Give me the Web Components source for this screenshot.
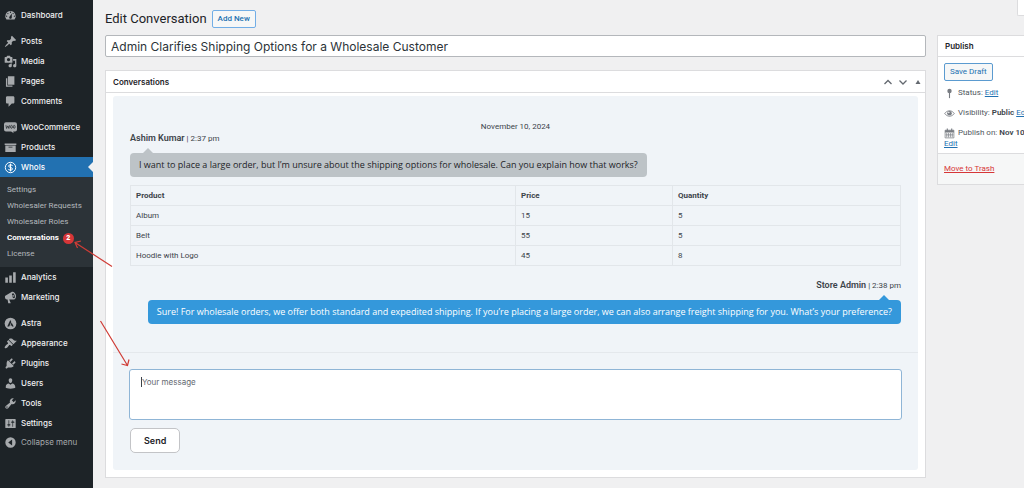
<!DOCTYPE html>
<html lang="en">
<head>
<meta charset="utf-8">
<meta name="viewport" content="width=device-width, initial-scale=1">
<title>Edit Conversation</title>
<style>
  html, body { margin: 0; min-height: 100%; }
  body {
    --ui: Inter, "Liberation Sans", sans-serif;
    --small: Roboto, "Liberation Sans", sans-serif;
    --message: "Open Sans", "Liberation Sans", sans-serif;
    background: #f0f0f1; overflow-x: hidden; font: 9px/12px var(--ui); color: #3c434a;
  }
</style>
</head>
<body>
<admin-shell>
  <admin-menu slot="menu">
    <menu-item icon="dashboard">Dashboard</menu-item>
    <menu-item icon="post" group>Posts</menu-item>
    <menu-item icon="media">Media</menu-item>
    <menu-item icon="page">Pages</menu-item>
    <menu-item icon="comment">Comments</menu-item>
    <menu-item icon="woo" group>WooCommerce</menu-item>
    <menu-item icon="products">Products</menu-item>
    <menu-item icon="dollar" current>Whols</menu-item>
    <sub-menu></sub-menu>
    <menu-item icon="chart">Analytics</menu-item>
    <menu-item icon="megaphone">Marketing</menu-item>
    <menu-item icon="astra" group>Astra</menu-item>
    <menu-item icon="brush">Appearance</menu-item>
    <menu-item icon="plug">Plugins</menu-item>
    <menu-item icon="user">Users</menu-item>
    <menu-item icon="wrench">Tools</menu-item>
    <menu-item icon="sliders">Settings</menu-item>
    <menu-item icon="collapse" muted>Collapse menu</menu-item>
  </admin-menu>

  <page-header slot="header"></page-header>

  <post-box slot="content" heading="Conversations">
    <chat-panel>
      <chat-message author="Ashim Kumar" time="2:37 pm">I want to place a large order, but I’m unsure about the shipping options for wholesale. Can you explain how that works?</chat-message>
      <order-table></order-table>
      <chat-message author="Store Admin" time="2:38 pm" own>Sure! For wholesale orders, we offer both standard and expedited shipping. If you’re placing a large order, we can also arrange freight shipping for you. What’s your preference?</chat-message>
      <reply-form slot="reply"></reply-form>
    </chat-panel>
  </post-box>

  <publish-box slot="side"></publish-box>
</admin-shell>

<script>
const define = (name, html, setup) => {
  const template = document.createElement('template');
  template.innerHTML = html;
  customElements.define(name, class extends HTMLElement {
    connectedCallback() {
      if (this.shadowRoot) return;
      const root = this.attachShadow({ mode: 'open' });
      root.append(template.content.cloneNode(true));
      if (setup) setup(this, root);
    }
  });
};

const p = d => `<path fill-rule="evenodd" d="${d}"/>`;
const ICONS = {
  dashboard: p('M3.76 16h12.48A7.998 7.998 0 0 0 10 3a7.998 7.998 0 0 0-6.24 13zM10 4c.55 0 1 .45 1 1s-.45 1-1 1-1-.45-1-1 .45-1 1-1zM6 6c.55 0 1 .45 1 1s-.45 1-1 1-1-.45-1-1 .45-1 1-1zm8 0c.55 0 1 .45 1 1s-.45 1-1 1-1-.45-1-1 .45-1 1-1zm-5.37 5.55L12 7v6c0 1.1-.9 2-2 2s-2-.9-2-2c0-.57.24-1.08.63-1.45zM4 10c.55 0 1 .45 1 1s-.45 1-1 1-1-.45-1-1 .45-1 1-1zm12 0c.55 0 1 .45 1 1s-.45 1-1 1-1-.45-1-1 .45-1 1-1z'),
  post: p('M10.44 3.02l1.82-1.82 6.36 6.35-1.83 1.82c-1.05-.68-2.48-.57-3.41.36l-.75.75c-.92.93-1.04 2.35-.35 3.41l-1.83 1.82-2.41-2.41-2.8 2.79c-.42.42-3.38 2.71-3.8 2.29s1.86-3.39 2.28-3.81l2.79-2.79L4.1 9.36l1.83-1.82c1.05.69 2.48.57 3.4-.36l.75-.75c.93-.92 1.05-2.35.36-3.41z'),
  media: p('M13 11V4c0-.55-.45-1-1-1h-1.67L9 1H5L3.67 3H2c-.55 0-1 .45-1 1v7c0 .55.45 1 1 1h10c.55 0 1-.45 1-1zM7 4.5c1.38 0 2.5 1.12 2.5 2.5S8.38 9.5 7 9.5 4.5 8.38 4.5 7 5.62 4.5 7 4.5zM14 6h5v10.5c0 1.38-1.12 2.5-2.5 2.5S14 17.88 14 16.5s1.12-2.5 2.5-2.5c.17 0 .34.02.5.05V9h-3V6zm-4 8.05V13h2v3.5c0 1.38-1.12 2.5-2.5 2.5S7 17.88 7 16.5 8.12 14 9.5 14c.17 0 .34.02.5.05z'),
  page: p('M6 15V2h10v13H6zm-1 1h8v2H3V5h2v11z'),
  comment: p('M5 2h9c1.1 0 2 .9 2 2v7c0 1.1-.9 2-2 2h-2l-5 5v-5H5c-1.1 0-2-.9-2-2V4c0-1.1.9-2 2-2z'),
  woo: '<path d="M3 2h14q3 0 3 3v8q0 3-3 3h-3l1 3-4-3H3q-3 0-3-3V5q0-3 3-3z"/><g fill="none" stroke="#1d2327" stroke-width="1.1"><path d="M3 6.500l1 5 2-4 1.500 4 1-5"/><ellipse cx="11.500" cy="9" rx="1.400" ry="2.300"/><ellipse cx="15.700" cy="9" rx="1.400" ry="2.300"/></g>',
  products: p('M19 4v2H1V4h18zM2 7h16v10H2V7zm11 3V9H7v1h6z'),
  dollar: '<g fill="none" stroke="currentColor" stroke-width="1.500"><circle cx="10" cy="10" r="8"/><path d="M13 7.500q-.5-1.700-3-1.700-2.800 0-2.800 2 0 1.700 2.800 2.200 3 .5 3 2.200 0 2-3 2-2.600 0-3.200-1.900M10 4v12"/></g>',
  chart: p('M18 18V2h-4v16h4zm-6 0V7H8v11h4zm-6 0v-8H2v8h4z'),
  megaphone: '<path d="M18.150 5.940c.46 1.620.38 3.220-.02 4.480-.42 1.280-1.260 2.180-2.300 2.480-.3.100-.700.100-1 .1h-6.800l2.220 5.500c.02.3-.2.500-.48.500H6.950c-.3 0-.5-.2-.48-.5l-1-5.500H4.250c-1.200 0-2.300-1-2.620-2.500-.5-1.600 0-3 1.040-3.500l9-5.400c.4-.3.600-.4 1-.5 2.200-.6 4.640 1.700 5.480 4.840z"/><ellipse cx="14.500" cy="7.300" rx="2" ry="4" transform="rotate(-16 14.500 7.300)" fill="#1d2327"/><ellipse cx="14" cy="7.400" rx="1" ry="1.800"/>',
  astra: '<circle cx="10" cy="10" r="9"/><g fill="#1d2327"><path d="M9.700 4.500l1.500 3L8 14.500H5z"/><path d="M11.700 8.500l3.200 6h-2.400l-.7-1.500H10z"/></g>',
  brush: p('M14.480 11.060L7.410 3.990l1.500-1.500c.5-.56 2.300-.47 3.510.32 1.210.8 1.430 1.280 2.910 2.100 1.180.64 2.450 1.260 4.450.85zm-.71.71L6.700 4.700 4.930 6.470c-.39.39-.39 1.020 0 1.410l1.060 1.060c.39.39.39 1.030 0 1.420-.6.600-1.430 1.110-2.210 1.690-.35.26-.7.530-1.010.84C1.430 14.230.4 16.080 1.400 17.070c.99 1 2.840-.03 4.180-1.360.31-.31.58-.66.85-1.020.57-.78 1.080-1.610 1.690-2.210.39-.39 1.020-.39 1.410 0l1.060 1.060c.39.39 1.020.39 1.410 0z'),
  plug: p('M13.110 4.360L9.870 7.600 8 5.730l3.240-3.240c.35-.34 1.050-.2 1.560.32.52.51.66 1.210.31 1.550zm-8 1.770l.91-1.120 9.010 9.010-1.190.84c-.71.71-2.630 1.160-3.820 1.160H6.140L4.900 17.260c-.59.59-1.540.59-2.120 0-.59-.58-.59-1.530 0-2.120l1.240-1.240v-3.880c0-1.130.4-3.190 1.090-3.890zm7.260 3.970l3.240-3.240c.34-.35 1.040-.21 1.550.31.52.51.66 1.210.31 1.550l-3.240 3.250z'),
  user: p('M10 9.250c-2.270 0-2.730-3.440-2.730-3.440C7 4.020 7.820 2 9.970 2c2.160 0 2.980 2.020 2.710 3.810 0 0-.41 3.440-2.680 3.440zm0 2.570L12.720 10c2.390 0 4.520 2.330 4.520 4.530v2.490s-3.650 1.130-7.240 1.130c-3.650 0-7.240-1.130-7.240-1.130v-2.490c0-2.250 1.940-4.480 4.470-4.480z'),
  wrench: p('M16.680 9.770c-1.340 1.340-3.300 1.670-4.950.99l-5.410 6.520c-.99.99-2.590.99-3.580 0s-.99-2.590 0-3.570l6.520-5.420c-.68-1.650-.35-3.610.99-4.950 1.280-1.280 3.120-1.620 4.720-1.060l-2.890 2.890 2.820 2.820 2.860-2.870c.53 1.580.18 3.390-1.080 4.650zM3.810 16.210c.4.390 1.040.39 1.430 0 .4-.4.4-1.040 0-1.430-.39-.4-1.030-.4-1.430 0-.39.39-.39 1.030 0 1.430z'),
  sliders: p('M18 16V4c0-.55-.45-1-1-1H3c-.55 0-1 .45-1 1v12c0 .55.45 1 1 1h14c.55 0 1-.45 1-1zM8 11h1c.55 0 1 .45 1 1s-.45 1-1 1H8v1.500c0 .28-.22.5-.5.5s-.5-.22-.5-.5V13H6c-.55 0-1-.45-1-1s.45-1 1-1h1V5.500c0-.28.22-.5.5-.5s.5.220.5.5V11zm5-2h-1c-.55 0-1-.45-1-1s.45-1 1-1h1V5.500c0-.28.22-.5.5-.5s.5.220.5.5V7h1c.55 0 1 .45 1 1s-.45 1-1 1h-1v5.500c0 .28-.22.5-.5.5s-.5-.22-.5-.5V9z'),
  collapse: p('M10 2a8 8 0 1 0 0 16 8 8 0 0 0 0-16zM12.500 5.500v9L6.500 10z'),
  pin: '<circle cx="10" cy="5.500" r="4"/><path d="M9 9h2v8l-1 2-1-2z"/>',
  eye: '<path d="M1 10q9-10.500 18 0-9 10.500-18 0z" fill="none" stroke="currentColor" stroke-width="1.400"/><circle cx="10" cy="9.500" r="4.200"/><circle cx="8.800" cy="8.300" r="1.300" fill="#fff"/>',
  calendar: '<path d="M2 4h16v14H2z" fill="none" stroke="currentColor" stroke-width="1.300"/><path d="M2 4h16v4H2zM5 1h2v4H5zM13 1h2v4h-2z"/><path d="M5 9v8M8.300 9v8M11.700 9v8M15 9v8M3 12.500h14" stroke="currentColor" stroke-width="1.300"/>'
};

define('wp-icon', `
  <style>
    :host { display: block; flex: none; width: 13px; height: 13px; }
    svg { display: block; width: 100%; height: 100%; fill: currentColor; }
  </style>
  <svg viewBox="0 0 20 20" aria-hidden="true"></svg>`,
  (el, root) => { root.querySelector('svg').innerHTML = ICONS[el.getAttribute('name')] || ''; });

define('admin-shell', `
  <style>
    :host { display: grid; grid-template-columns: 93px minmax(0, 1fr); min-height: 100vh; position: relative; overflow: hidden; }
    main { display: grid; grid-template-columns: minmax(0, 1fr) 87px; grid-template-rows: auto auto; column-gap: 11px; padding-left: 12px; align-content: start; }
    .header { grid-column: 1 / -1; grid-row: 1; }
    .content { grid-column: 1; grid-row: 2; padding-bottom: 11px; }
    .side { grid-column: 2; grid-row: 2; }
    .notes { position: absolute; left: 70px; top: 236px; width: 64px; height: 134px; pointer-events: none; fill: none; stroke: #d03c36; stroke-width: 1.200; }
  </style>
  <slot name="menu"></slot>
  <main>
    <div class="header"><slot name="header"></slot></div>
    <div class="content"><title-field></title-field><slot name="content"></slot></div>
    <div class="side"><slot name="side"></slot></div>
  </main>
  <svg class="notes" viewBox="0 0 64 134" aria-hidden="true">
    <path d="M42 30.500L5 6.500M11 5L5 6.500 7.500 12"/>
    <path d="M30.500 85L57.500 129.500M51.500 128L57.500 129.500 59 123.500"/>
  </svg>`);

define('admin-menu', `
  <style>
    :host { display: block; background: #1d2327; }
    nav { display: flex; flex-direction: column; padding-top: 5px; }
  </style>
  <nav aria-label="Main menu"><slot></slot></nav>`);

define('menu-item', `
  <style>
    :host { display: block; color: #f0f0f1; }
    :host([group]) { margin-top: 6px; }
    a { display: flex; align-items: center; gap: 4px; height: 20px; padding-left: 4px; color: inherit; text-decoration: none; font-size: 8px; font-weight: 500; white-space: nowrap; position: relative; }
    wp-icon { color: #a7aaad; }
    :host([current]) a { background: #2271b1; color: #fff; }
    :host([current]) wp-icon { color: #fff; }
    :host([current]) a::after { content: ""; position: absolute; right: 0; top: 5px; border: 5px solid transparent; border-left: 0; border-right-color: #f0f0f1; }
    :host([muted]) { color: #a7aaad; }
    :host([muted]) a { height: 18px; font-weight: 400; }
  </style>
  <a href="#"><span><slot></slot></span></a>`,
  (el, root) => {
    const icon = document.createElement('wp-icon');
    icon.setAttribute('name', el.getAttribute('icon'));
    root.querySelector('a').prepend(icon);
  });

define('sub-menu', `
  <style>
    :host { display: block; background: #2c3338; }
    ul { list-style: none; margin: 0; padding: 5px 0 5px 7px; }
    a { display: flex; align-items: center; gap: 4px; height: 16px; font-family: var(--small); font-size: 8px; color: #b4b9be; text-decoration: none; white-space: nowrap; }
    a[aria-current] { color: #fff; font-weight: 700; }
    b { display: grid; place-items: center; width: 11px; height: 11px; border-radius: 50%; background: #d63638; font-size: 7px; line-height: 11px; }
  </style>
  <ul>
    <li><a href="#">Settings</a></li>
    <li><a href="#">Wholesaler Requests</a></li>
    <li><a href="#">Wholesaler Roles</a></li>
    <li><a href="#" aria-current="page">Conversations <b>2</b></a></li>
    <li><a href="#">License</a></li>
  </ul>`);

define('page-header', `
  <style>
    :host { display: flex; align-items: flex-start; height: 35px; }
    h1 { margin: 10px 5px 0 0; font: 400 13px/18px var(--small); color: #1d2327; }
    button { margin: 10px 0 0; height: 18px; padding: 0 5px; border: 1px solid #72aee6; border-radius: 2px; background: #f6f7f7; color: #2271b1; font: 500 8px/14px var(--small); }
    .tab { box-sizing: border-box; margin-left: auto; width: 7px; height: 16px; background: #fff; border: 1px solid #dcdcde; border-width: 0 0 1px 1px; border-radius: 0 0 0 2px; }
  </style>
  <h1>Edit Conversation</h1>
  <button type="button">Add New</button>
  <div class="tab"></div>`);

define('title-field', `
  <style>
    :host { display: block; margin-bottom: 13px; }
    input { display: block; box-sizing: border-box; width: 100%; height: 22px; padding: 0 5px; border: 1px solid #b4b7bb; border-radius: 2px; background: #fff; color: #2c3338; font: 400 12px/18px var(--ui); outline: 0; }
  </style>
  <input aria-label="Title" value="Admin Clarifies Shipping Options for a Wholesale Customer">`);

define('post-box', `
  <style>
    :host { display: block; background: #fff; border: 1px solid #dcdcde; }
    header { display: flex; align-items: center; height: 21px; padding-left: 7px; border-bottom: 1px solid #dcdcde; }
    h2 { margin: 0 auto 0 0; font-size: 8px; line-height: 12px; font-weight: 600; color: #1d2327; }
    button { display: grid; place-items: center; width: 15px; height: 18px; padding: 0; border: 0; background: none; color: #646970; }
    svg { display: block; width: 10px; height: 10px; fill: none; stroke: currentColor; stroke-width: 1.300; }
    .body { padding: 3px 7px 7px; }
  </style>
  <header>
    <h2></h2>
    <button type="button" aria-label="Move up"><svg viewBox="0 0 10 10"><path d="M1.500 7L5 3.500 8.500 7"/></svg></button>
    <button type="button" aria-label="Move down"><svg viewBox="0 0 10 10"><path d="M1.500 3.500L5 7 8.500 3.500"/></svg></button>
    <button type="button" aria-label="Toggle panel"><svg viewBox="0 0 10 10"><path d="M5 3L7.500 7h-5z" fill="currentColor" stroke="none"/></svg></button>
  </header>
  <div class="body"><slot></slot></div>`,
  (el, root) => { root.querySelector('h2').textContent = el.getAttribute('heading'); });

define('chat-panel', `
  <style>
    :host { display: block; background: #f0f4f8; border-radius: 3px; }
    .thread { padding: 26px 17px 28px; }
    time { display: block; text-align: center; font: 400 8px/10px var(--small); }
    .reply { border-top: 1px solid #e4e8ec; padding: 16px 16px 17px; }
  </style>
  <div class="thread">
    <time datetime="2024-11-10">November 10, 2024</time>
    <slot></slot>
  </div>
  <div class="reply"><slot name="reply"></slot></div>`);

define('chat-message', `
  <style>
    :host { display: flex; flex-direction: column; align-items: flex-start; --bubble: #bdc3c7; }
    :host([own]) { align-items: flex-end; margin-top: 13px; --bubble: #3498db; }
    .meta { font: 400 8px/12px var(--small); }
    strong { font-size: 9px; font-weight: 600; }
    .bubble { position: relative; margin-top: 8px; padding: 4px 9px; border-radius: 4px; background: var(--bubble); color: #1d2327; font: 400 9px/16px var(--message); }
    :host([own]) .bubble { color: #fff; }
    .bubble::before { content: ""; position: absolute; left: 12px; top: -5px; border: 6px solid transparent; border-top: 0; border-bottom-color: var(--bubble); }
    :host([own]) .bubble::before { left: auto; right: 11px; }
  </style>
  <div class="meta"><strong></strong> | <span></span></div>
  <div class="bubble"><slot></slot></div>`,
  (el, root) => {
    root.querySelector('strong').textContent = el.getAttribute('author');
    root.querySelector('span').textContent = el.getAttribute('time');
  });

define('order-table', `
  <style>
    :host { display: block; margin-top: 8px; }
    table { width: 100%; border-collapse: collapse; table-layout: fixed; font: 400 8px/10px var(--small); }
    th, td { box-sizing: border-box; height: 20px; padding: 4px 5px; border: 1px solid #e2e6ea; text-align: left; }
    th { font-weight: 700; }
    th:first-child { width: 50%; }
    th:nth-child(2) { width: 157px; }
  </style>
  <table>
    <thead><tr><th scope="col">Product</th><th scope="col">Price</th><th scope="col">Quantity</th></tr></thead>
    <tbody>
      <tr><td>Album</td><td>15</td><td>5</td></tr>
      <tr><td>Belt</td><td>55</td><td>5</td></tr>
      <tr><td>Hoodie with Logo</td><td>45</td><td>8</td></tr>
    </tbody>
  </table>`);

define('reply-form', `
  <style>
    :host { display: block; }
    textarea { display: block; box-sizing: border-box; width: 100%; height: 51px; padding: 6px 12px; border: 1px solid #8fb5d6; border-radius: 3px; background: linear-gradient(#3c434a, #3c434a) 11px 7px / 1px 10px no-repeat #fff; font: 400 8px/12px var(--ui); resize: none; outline: 0; }
    textarea::placeholder { color: #646970; opacity: 1; }
    button { display: block; margin: 8px 0 0 1px; height: 25px; padding: 0 13px; border: 1px solid #c3c4c7; border-radius: 5px; background: #fff; color: #1d2327; font: 600 9px/16px var(--ui); }
  </style>
  <form>
    <textarea aria-label="Your message" placeholder="Your message"></textarea>
    <button type="button">Send</button>
  </form>`);

define('publish-box', `
  <style>
    :host { display: block; box-sizing: border-box; width: 187px; background: #fff; border: 1px solid #dcdcde; font: 400 8px/12px var(--small); color: #50575e; }
    h2 { margin: 0; padding: 0 7px; border-bottom: 1px solid #dcdcde; font: 600 8px/20px var(--ui); color: #1d2327; }
    .body { padding: 6px 6px 4px; }
    button { display: block; height: 18px; margin: 0 0 3px; padding: 0 5px; border: 1px solid #5b9bd0; border-radius: 2px; background: #f6f7f7; color: #2271b1; font: 400 8px/14px var(--small); }
    .row { display: flex; align-items: center; gap: 3px; height: 18px; white-space: nowrap; }
    .row + .row { margin-top: 2px; }
    wp-icon { width: 11px; height: 11px; color: #787c82; }
    b { font-weight: 600; color: #3c434a; }
    a { color: #2271b1; }
    .more { display: block; line-height: 10px; margin-top: -3px; }
    footer { padding: 9px 6px; border-top: 1px solid #dcdcde; background: #f6f7f7; }
    footer a { color: #d63638; }
  </style>
  <h2>Publish</h2>
  <div class="body">
    <button type="button">Save Draft</button>
    <div class="row"><wp-icon name="pin"></wp-icon><span>Status: <a href="#">Edit</a></span></div>
    <div class="row"><wp-icon name="eye"></wp-icon><span>Visibility: <b>Public</b> <a href="#">Edit</a></span></div>
    <div class="row"><wp-icon name="calendar"></wp-icon><span>Publish on: <b>Nov 10</b></span></div>
    <a class="more" href="#">Edit</a>
  </div>
  <footer><a href="#">Move to Trash</a></footer>`);
</script>
</body>
</html>
